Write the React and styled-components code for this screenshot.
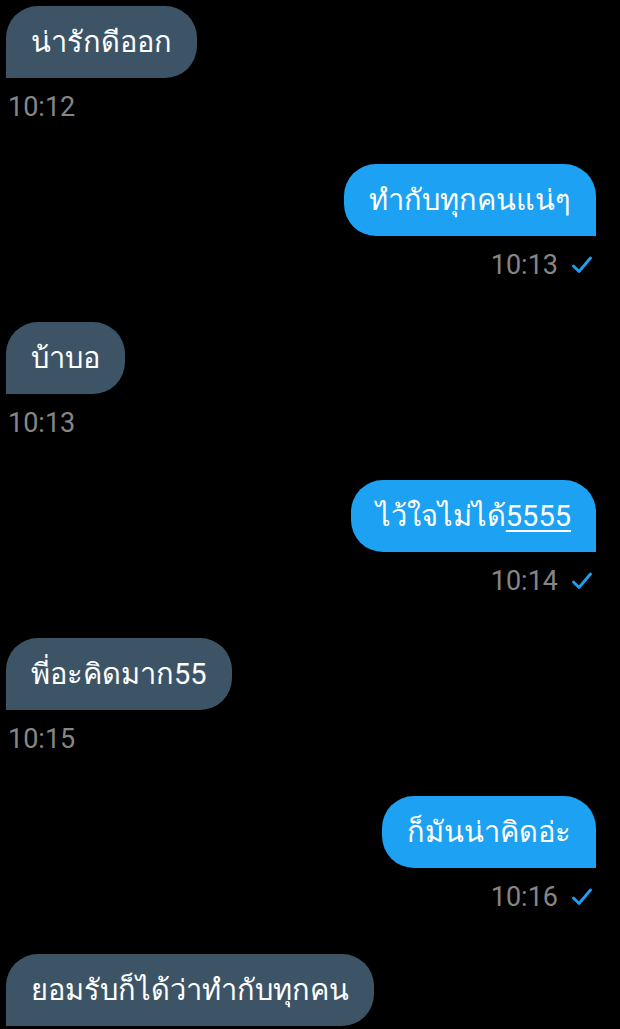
import styled, { createGlobalStyle } from "styled-components";

const GlobalStyle = createGlobalStyle`
  html, body {
    margin: 0;
    padding: 0;
    background: #000;
  }
  body {
    font-family: Roboto, "Noto Sans", "DejaVu Sans", sans-serif;
  }
`;

const Thread = styled.div`
  width: 620px;
  height: 1029px;
  overflow: hidden;
  background: #000;
  display: flex;
  flex-direction: column;
  gap: 40px;
  padding: 6px 24px 0 6px;
  box-sizing: border-box;
`;

const Group = styled.div`
  display: flex;
  flex-direction: column;
  align-items: ${(p) => (p.$mine ? "flex-end" : "flex-start")};
`;

const Bubble = styled.div`
  height: 72px;
  display: flex;
  align-items: center;
  padding: 0 25px;
  box-sizing: border-box;
  font-size: 29px;
  color: #fff;
  white-space: nowrap;
  background: ${(p) => (p.$mine ? "#1da1f2" : "#3d5466")};
  border-radius: ${(p) => (p.$mine ? "32px 32px 0 32px" : "32px 32px 32px 0")};
`;

const Link = styled.span`
  text-decoration: underline;
  text-underline-offset: 4px;
  text-decoration-thickness: 2px;
`;

const Meta = styled.div`
  height: 34px;
  margin-top: 12px;
  display: flex;
  align-items: center;
  gap: 14px;
  padding: ${(p) => (p.$mine ? "0 4px 0 0" : "0 0 0 2px")};
`;

const Time = styled.span`
  font-size: 27px;
  color: #868686;
`;

const Check = () => (
  <svg width="20" height="18" viewBox="0 0 20 18" fill="none">
    <path
      d="M1.5 10 L7 15.5 L18.5 2"
      stroke="#1da1f2"
      strokeWidth="2.8"
      strokeLinecap="round"
      strokeLinejoin="round"
    />
  </svg>
);

const messages = [
  { mine: false, text: "น่ารักดีออก", time: "10:12" },
  { mine: true, text: "ทำกับทุกคนแน่ๆ", time: "10:13" },
  { mine: false, text: "บ้าบอ", time: "10:13" },
  { mine: true, text: "ไว้ใจไม่ได้", link: "5555", time: "10:14" },
  { mine: false, text: "พี่อะคิดมาก55", time: "10:15" },
  { mine: true, text: "ก็มันน่าคิดอ่ะ", time: "10:16" },
  { mine: false, text: "ยอมรับก็ได้ว่าทำกับทุกคน" },
];

export default function App() {
  return (
    <>
      <GlobalStyle />
      <Thread>
        {messages.map((m, i) => (
          <Group key={i} $mine={m.mine}>
            <Bubble $mine={m.mine}>
              {m.text}
              {m.link && <Link>{m.link}</Link>}
            </Bubble>
            {m.time && (
              <Meta $mine={m.mine}>
                <Time>{m.time}</Time>
                {m.mine && <Check />}
              </Meta>
            )}
          </Group>
        ))}
      </Thread>
    </>
  );
}
